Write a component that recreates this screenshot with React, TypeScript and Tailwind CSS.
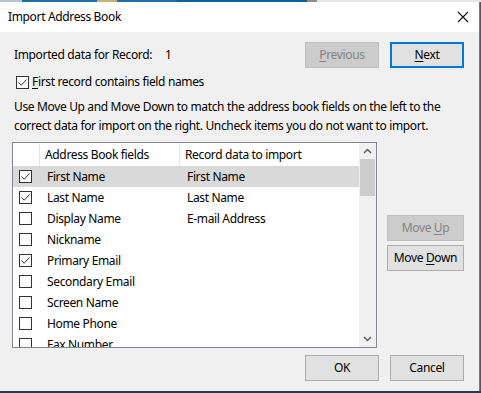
import React from "react";

type Row = { name: string; data: string; checked: boolean };

const rows: Row[] = [
  { name: "First Name", data: "First Name", checked: true },
  { name: "Last Name", data: "Last Name", checked: true },
  { name: "Display Name", data: "E-mail Address", checked: false },
  { name: "Nickname", data: "", checked: false },
  { name: "Primary Email", data: "", checked: true },
  { name: "Secondary Email", data: "", checked: false },
  { name: "Screen Name", data: "", checked: false },
  { name: "Home Phone", data: "", checked: false },
  { name: "Fax Number", data: "", checked: false },
];

const Check = ({ checked }: { checked: boolean }) => (
  <div className="w-[13px] h-[13px] border border-[#333333] bg-white shrink-0 flex items-center justify-center">
    {checked && (
      <svg width="11" height="11" viewBox="0 0 11 11">
        <path d="M1.5 5.5 L4.2 8.2 L9.5 2.5" fill="none" stroke="#333333" strokeWidth="1" />
      </svg>
    )}
  </div>
);

const Btn = ({ children, disabled, focused }: { children: React.ReactNode; disabled?: boolean; focused?: boolean }) => (
  <div
    className={
      disabled
        ? "h-[26px] flex items-center justify-center bg-[#cccccc] border border-[#bfbfbf] text-[#838383]"
        : focused
        ? "h-[26px] flex items-center justify-center bg-[#e1e1e1] border-2 border-[#0078d7] text-[#000000]"
        : "h-[26px] flex items-center justify-center bg-[#e1e1e1] border border-[#adadad] text-[#000000]"
    }
  >
    {children}
  </div>
);

export default function App() {
  return (
    <div className="w-[481px] h-[393px] overflow-hidden flex flex-col bg-[#4a5a6a] font-['Segoe_UI','Noto_Sans',sans-serif] text-[12px] leading-[16px] tracking-[-0.35px] text-[#000000] whitespace-nowrap">
      <div className="h-[2px] flex shrink-0">
        <div className="w-[22px] bg-[#b8c2cc]" />
        <div className="w-[75px] bg-[#1f6ea8]" />
        <div className="w-[20px] bg-[#c9b27a]" />
        <div className="w-[60px] bg-[#1f6ea8]" />
        <div className="w-[130px] bg-[#0d5f9e]" />
        <div className="w-[10px] bg-[#8d8d8d]" />
        <div className="flex-1 bg-[#e6e6e6]" />
      </div>
      <div className="w-[480px] h-[389px] border-r border-[#7a7a7a] bg-[#f0f0f0] flex flex-col">
        <div className="h-[30px] bg-white flex items-center justify-between pl-[8px] pr-[10px] shrink-0">
          <span>Import Address Book</span>
          <svg width="12" height="12" viewBox="0 0 12 12">
            <path d="M1 1 L11 11 M11 1 L1 11" stroke="#111111" strokeWidth="1.1" />
          </svg>
        </div>

        <div className="flex flex-col pl-[12px] pr-[15px]">
          <div className="flex items-center mt-[10px] h-[26px]">
            <span className="ml-[2px]">Imported data for Record:</span>
            <span className="ml-[13px]">1</span>
            <div className="flex-1" />
            <div className="w-[74px]">
              <Btn disabled>
                <span><u className="underline-offset-2">P</u>revious</span>
              </Btn>
            </div>
            <div className="w-[74px] ml-[11px]">
              <Btn focused>
                <span><u className="underline-offset-2">N</u>ext</span>
              </Btn>
            </div>
          </div>

          <div className="flex items-center mt-[7px] ml-[4px] h-[14px] gap-[3px]">
            <Check checked />
            <span><u className="underline-offset-2">F</u>irst record contains field names</span>
          </div>

          <p className="mt-[8px] ml-[2px] leading-[19px]">
            Use Move Up and Move Down to match the address book fields on the left to the
            <br />
            correct data for import on the right. Uncheck items you do not want to import.
          </p>

          <div className="flex mt-[7px]">
            <div className="w-[365px] h-[206px] border border-[#828790] bg-white flex overflow-hidden">
              <div className="flex-1 flex flex-col overflow-hidden">
                <div className="h-[23px] flex shrink-0">
                  <div className="w-[27px] border-r border-[#e5e5e5]" />
                  <div className="w-[140px] border-r border-[#e5e5e5] pl-[5px] flex items-center">Address Book fields</div>
                  <div className="flex-1 pl-[5px] flex items-center">Record data to import</div>
                </div>
                {rows.map((r, i) => (
                  <div
                    key={r.name}
                    className={i === 0 ? "h-[21px] flex items-center shrink-0 bg-[#d9d9d9]" : "h-[21px] flex items-center shrink-0"}
                  >
                    <div className="w-[34px] pl-[6px]">
                      <Check checked={r.checked} />
                    </div>
                    <div className="w-[140px]">{r.name}</div>
                    <div className="flex-1">{r.data}</div>
                  </div>
                ))}
              </div>
              <div className="w-[17px] bg-[#f0f0f0] flex flex-col shrink-0">
                <div className="h-[16px] flex items-center justify-center">
                  <svg width="9" height="6" viewBox="0 0 9 6">
                    <path d="M1 5 L4.5 1.5 L8 5" fill="none" stroke="#606060" strokeWidth="1.5" />
                  </svg>
                </div>
                <div className="h-[37px] bg-[#cdcdcd] mx-[1px]" />
                <div className="flex-1" />
                <div className="h-[16px] flex items-center justify-center">
                  <svg width="9" height="6" viewBox="0 0 9 6">
                    <path d="M1 1 L4.5 4.5 L8 1" fill="none" stroke="#606060" strokeWidth="1.5" />
                  </svg>
                </div>
              </div>
            </div>

            <div className="flex flex-col ml-[10px] pt-[73px] w-[77px] gap-[4px]">
              <Btn disabled>
                <span>Move <u className="underline-offset-2">U</u>p</span>
              </Btn>
              <Btn>
                <span>Move <u className="underline-offset-2">D</u>own</span>
              </Btn>
            </div>
          </div>

          <div className="flex justify-end mt-[7px] gap-[11px]">
            <div className="w-[74px]">
              <Btn>OK</Btn>
            </div>
            <div className="w-[74px]">
              <Btn>Cancel</Btn>
            </div>
          </div>
        </div>
      </div>
      <div className="h-[2px] bg-[#2c3a48] shrink-0" />
    </div>
  );
}
